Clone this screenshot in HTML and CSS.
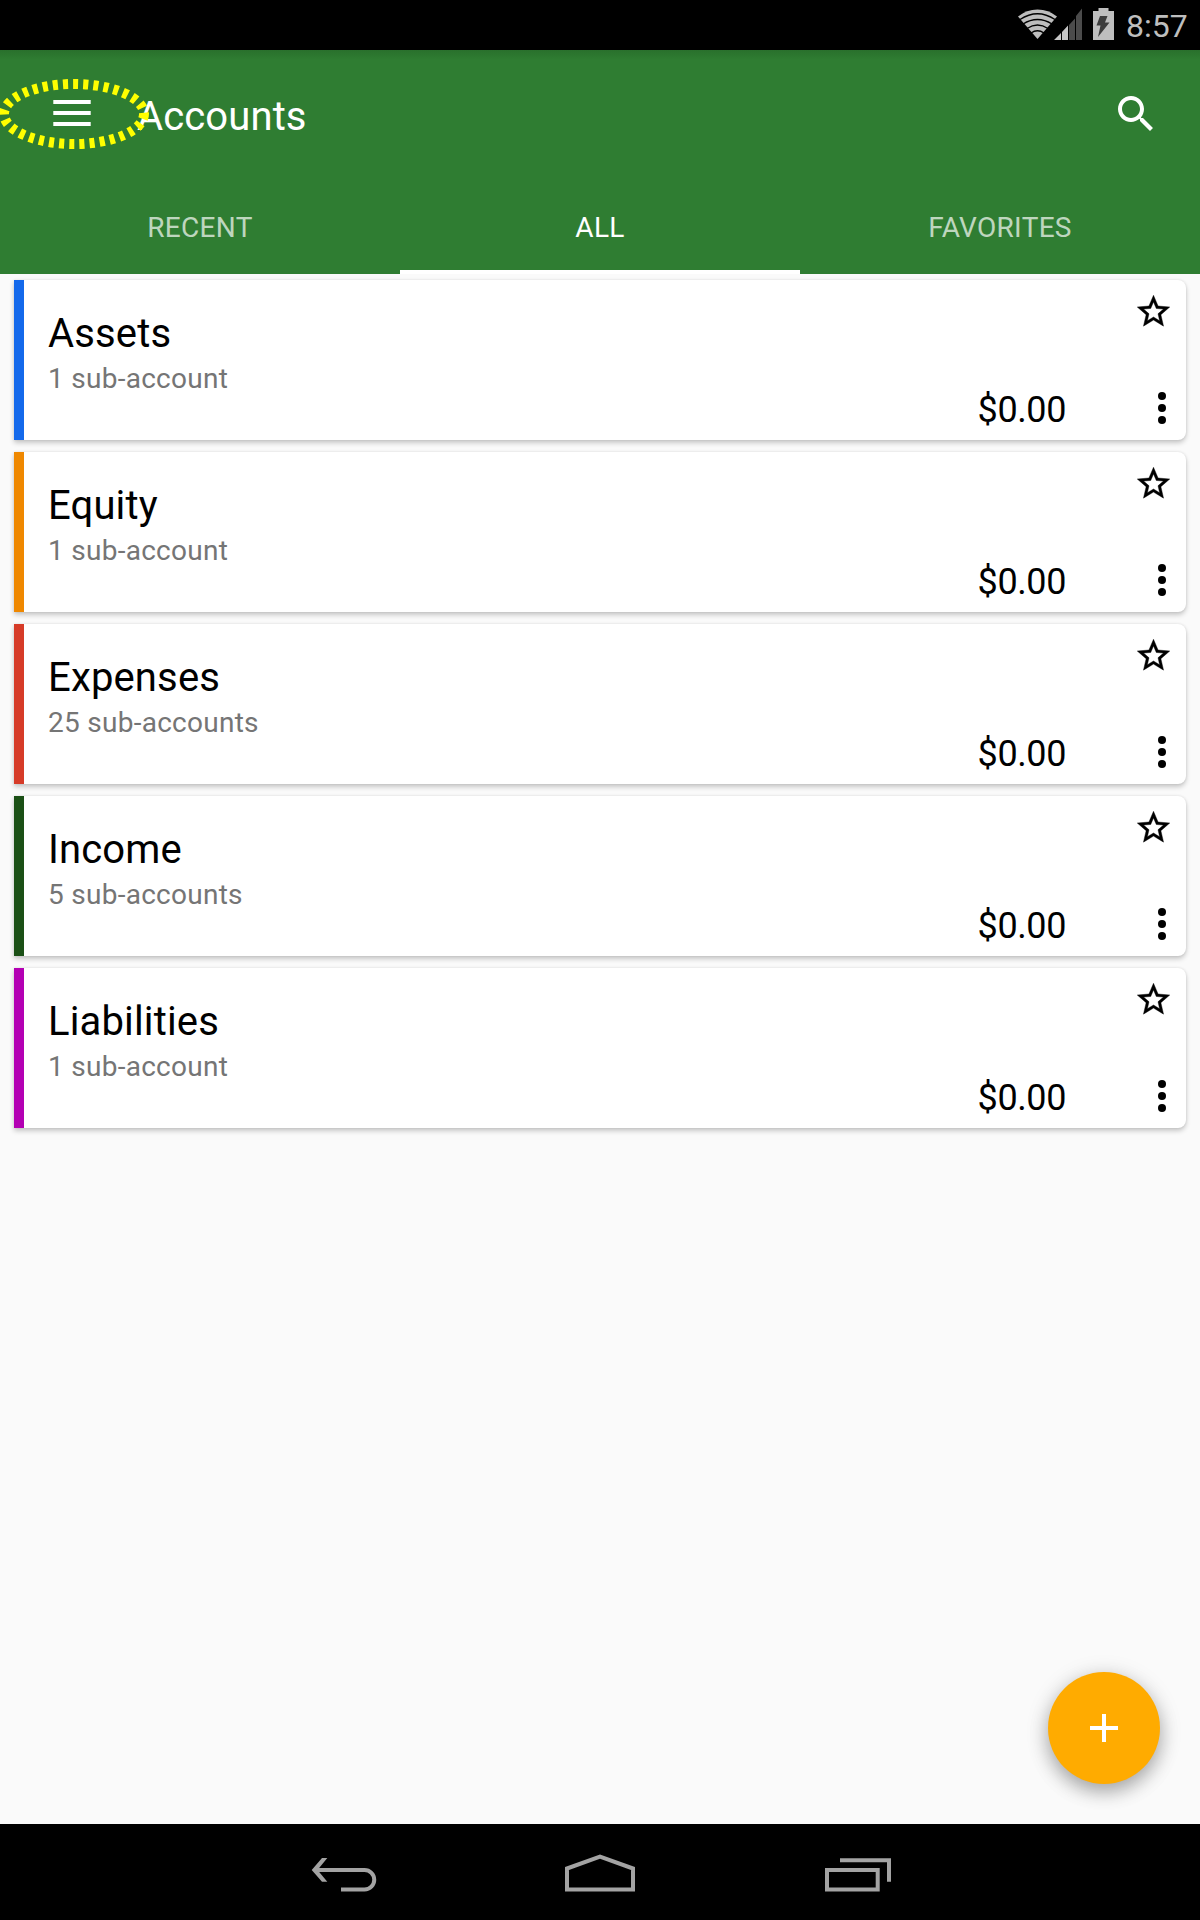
FILE: index.html
```html
<!DOCTYPE html>
<html lang="en">
<head>
<meta charset="utf-8">
<title>Accounts</title>
<link rel="stylesheet" href="styles.css">
</head>
<body>
<svg class="defs" width="0" height="0" aria-hidden="true">
  <symbol id="star" viewBox="0 0 24 24"><path stroke="#000" stroke-width=".25" d="M22 9.24l-7.19-.62L12 2 9.19 8.63 2 9.24l5.46 4.73L5.82 21 12 17.27 18.18 21l-1.63-7.03L22 9.24zM12 15.4l-3.76 2.27 1-4.28-3.32-2.88 4.38-.38L12 6.1l1.71 4.04 4.38.38-3.32 2.88 1 4.28L12 15.4z"/></symbol>
  <symbol id="more" viewBox="0 0 8 32"><circle cx="4" cy="4" r="4"/><circle cx="4" cy="16" r="4"/><circle cx="4" cy="28" r="4"/></symbol>
</svg>
<div class="screen">
  <div class="status">
    <svg class="status-icons" width="100" height="50" viewBox="1018 0 100 50">
      <path fill="#bebebe" d="M1037.5 39 1018 16.5Q1026.500 9.500 1037.500 9.500T1057 16.500Z"/>
      <g fill="none" stroke="#000" stroke-width="1.400"><path d="M1020 19.500Q1037.500 8 1055 19.500"/><path d="M1023 24Q1037.500 15 1052 24"/><path d="M1027 28.500Q1037.500 21.500 1048 28.500"/><path d="M1031 33Q1037.500 28.500 1044 33"/></g>
      <path fill="#c6c6c6" d="M1054 40l7-7v7zM1062 40V32l6-6.500V40z"/>
      <path fill="#4b4b4b" d="M1069 40V25l6-6.500V40zM1076 40V16l6-7.500V40z"/>
      <path fill="#bebebe" d="M1093 11h5.500V8h10v3h5.500v29h-21z"/>
      <path fill="#3c3c3c" d="M1100 16h7.500l-2.500 6.500h4.500L1098 37l2.500-11.500h-4z"/>
    </svg>
    <span class="clock">8:57</span>
  </div>
  <header class="appbar">
    <div class="toolbar">
      <svg class="menu" width="38" height="26" viewBox="0 0 38 26"><path fill="#fff" d="M.3 0h37.400v4H.3zM.3 11h37.400v4H.3zM.3 22h37.400v4H.3z"/></svg>
      <h1 class="title">Accounts</h1>
      <svg class="search" width="48" height="48" viewBox="0 0 24 24"><path fill="#fff" d="M15.500 14h-.79l-.28-.27C15.410 12.590 16 11.110 16 9.500 16 5.910 13.090 3 9.500 3S3 5.910 3 9.500 5.910 16 9.500 16c1.610 0 3.090-.59 4.230-1.570l.27.28v.79l5 4.990L20.490 19l-4.990-5zm-6 0C7.010 14 5 11.990 5 9.500S7.010 5 9.500 5 14 7.010 14 9.500 11.990 14 9.500 14z"/></svg>
      <svg class="highlight" width="152" height="74" viewBox="-2 77 152 74"><ellipse cx="74" cy="114" rx="70" ry="30"/></svg>
    </div>
    <nav class="tabs">
      <div class="tab">RECENT</div>
      <div class="tab active">ALL</div>
      <div class="tab">FAVORITES</div>
    </nav>
  </header>
  <main class="list">
    <article class="card assets"><div class="info"><h2>Assets</h2><p>1 sub-account</p></div><div class="amount">$0.00</div><div class="actions"><svg class="star"><use href="#star"/></svg><svg class="more"><use href="#more"/></svg></div></article>
    <article class="card equity"><div class="info"><h2>Equity</h2><p>1 sub-account</p></div><div class="amount">$0.00</div><div class="actions"><svg class="star"><use href="#star"/></svg><svg class="more"><use href="#more"/></svg></div></article>
    <article class="card expenses"><div class="info"><h2>Expenses</h2><p>25 sub-accounts</p></div><div class="amount">$0.00</div><div class="actions"><svg class="star"><use href="#star"/></svg><svg class="more"><use href="#more"/></svg></div></article>
    <article class="card income"><div class="info"><h2>Income</h2><p>5 sub-accounts</p></div><div class="amount">$0.00</div><div class="actions"><svg class="star"><use href="#star"/></svg><svg class="more"><use href="#more"/></svg></div></article>
    <article class="card liabilities"><div class="info"><h2>Liabilities</h2><p>1 sub-account</p></div><div class="amount">$0.00</div><div class="actions"><svg class="star"><use href="#star"/></svg><svg class="more"><use href="#more"/></svg></div></article>
    <div class="fab"><svg width="28" height="28" viewBox="0 0 28 28"><path fill="#fff" d="M12 0h4v12h12v4H16v12h-4V16H0v-4h12z"/></svg></div>
  </main>
  <footer class="navbar">
    <svg width="66" height="40" viewBox="311 1854 66 40"><path d="M314 1870h50.500a9.700 9.700 0 0 1 0 19.500H341"/><path class="fill" d="M311.700 1870l10.300-12h5.300l-9.800 12 9.800 11.800H322z"/></svg>
    <svg width="73" height="40" viewBox="564 1854 73 40"><path d="M567 1889.500V1868.500L600 1856.700 633 1868.500V1889.500Z"/></svg>
    <svg width="68" height="40" viewBox="824 1854 68 40"><path d="M827 1870h50.700v19.500H827zM840 1860.200h49v21.600"/></svg>
  </footer>
</div>
</body>
</html>
```
FILE: styles.css
```css
* { box-sizing: border-box; margin: 0; padding: 0; }
body { font-family: Roboto, sans-serif; background: #fafafa; }
svg { display: block; flex: none; }
.defs { position: absolute; }
.screen { width: 1200px; height: 1920px; display: flex; flex-direction: column; overflow: hidden; }
.status { height: 50px; background: #000; display: flex; justify-content: flex-end; padding-right: 12px; flex: none; }
.status-icons { margin-right: 8px; }
.clock { width: 62px; font-size: 32px; line-height: 53px; color: #bebebe; white-space: nowrap; }
.appbar { height: 224px; flex: none; background: linear-gradient(#29702c, #2f7d32 10px); color: #fff; display: flex; flex-direction: column; }
.toolbar { height: 128px; display: flex; position: relative; padding: 0 40px 0 53px; }
.menu { margin-top: 50px; }
.title { margin-left: 46px; font-size: 40px; font-weight: 400; line-height: 48px; letter-spacing: .12px; padding-top: 43px; flex: 1; }
.search { margin-top: 40px; }
.highlight { position: absolute; left: -2px; top: 27px; fill: none; stroke: #ff0; stroke-width: 10; stroke-dasharray: 5.08 5.08; }
.tabs { flex: 1; display: grid; grid-template-columns: repeat(3, 1fr); }
.tab { font-size: 28px; line-height: 36px; letter-spacing: .3px; padding-top: 32px; text-align: center; color: rgba(255,255,255,.7); }
.tab.active { color: #fff; border-bottom: 4px solid #fff; }
.list { flex: 1; position: relative; padding: 6px 14px; display: flex; flex-direction: column; gap: 12px; background: #fafafa; }
.card { height: 160px; flex: none; display: flex; background: #fff; border-left: 10px solid; border-radius: 0 8px 8px 0; box-shadow: 0 3px 5px rgba(0,0,0,.2), 0 0 3px rgba(0,0,0,.1); }
.assets { border-color: #1469eb; }
.equity { border-color: #ef8800; }
.expenses { border-color: #d63b28; }
.income { border-color: #1b5016; }
.liabilities { border-color: #b300b3; }
.info { flex: 1; padding: 30px 0 0 24px; }
.info h2 { font-size: 40px; font-weight: 400; line-height: 48px; letter-spacing: .15px; color: #000; }
.info p { font-size: 28px; line-height: 34px; margin-top: 4px; letter-spacing: .27px; color: #757575; }
.amount { align-self: flex-end; font-size: 36px; line-height: 42px; letter-spacing: -.4px; padding-bottom: 9px; color: #000; }
.actions { width: 120px; display: flex; flex-direction: column; align-items: flex-end; padding: 12px 12px 0 0; }
.star { width: 39px; height: 39px; margin-right: 1px; }
.more { width: 8px; height: 32px; margin: 61px 8px 0 0; }
.fab { position: absolute; right: 40px; bottom: 40px; width: 112px; height: 112px; border-radius: 50%; background: #ffab00; display: flex; align-items: center; justify-content: center; box-shadow: 0 8px 18px rgba(0,0,0,.26), 0 4px 24px rgba(0,0,0,.14); }
.navbar { height: 96px; flex: none; background: #000; display: flex; justify-content: space-between; padding: 30px 308px 0 311px; }
.navbar path { fill: none; stroke: #a3a3a3; stroke-width: 4; }
.navbar .fill { fill: #a3a3a3; stroke: none; }
```
